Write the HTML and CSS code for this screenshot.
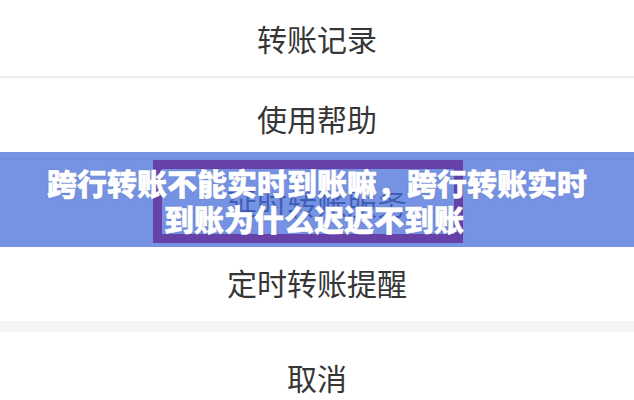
FILE: index.html
```html
<!DOCTYPE html>
<html lang="zh-CN">
<head>
<meta charset="utf-8">
<title>跨行转账不能实时到账嘛</title>
<link rel="stylesheet" href="styles.css">
</head>
<body>
<div class="page">
  <ul class="menu">
    <li class="item item-first">转账记录</li>
    <li class="item">使用帮助</li>
    <li class="item item-hidden">延时转账服务</li>
    <li class="item item-last">定时转账提醒</li>
    <li class="gap" aria-hidden="true"></li>
    <li class="item item-cancel">取消</li>
  </ul>
  <div class="banner">
    <div class="frame"></div>
    <h1 class="title"><span class="line">跨行转账不能实时到账嘛，跨行转账实时</span><span class="line line-2">到账为什么迟迟不到账</span></h1>
  </div>
</div>
</body>
</html>
```

FILE: styles.css
```css
html, body {
  margin: 0;
  padding: 0;
  background: #ffffff;
}
.page {
  position: relative;
  width: 634px;
  height: 400px;
  overflow: hidden;
  font-family: "Noto Sans CJK SC", "Noto Sans", sans-serif;
}
.menu {
  list-style: none;
  margin: 0;
  padding: 0;
  display: flex;
  flex-direction: column;
}
.item {
  height: 80px;
  display: flex;
  align-items: center;
  justify-content: center;
  font-size: 30px;
  font-weight: 400;
  color: #363636;
  border-bottom: 2px solid #eeeeee;
}
.item-first {
  height: 76px;
}
.item-hidden {
  color: #0a1030;
  padding-top: 4px;
  height: 76px;
}
.item-last {
  height: 79px;
  border-bottom: none;
}
.gap {
  height: 11px;
  background: #f5f5f5;
}
.item-cancel {
  height: 86px;
  border-bottom: none;
  padding-top: 2px;
}
.banner {
  position: absolute;
  left: 0;
  top: 152px;
  width: 634px;
  height: 95px;
  background: rgba(80, 116, 219, 0.78);
  display: flex;
  align-items: center;
  justify-content: center;
}
.frame {
  position: absolute;
  left: 153px;
  top: 8px;
  width: 292px;
  height: 65px;
  border: 9px solid #6642a8;
}
.title {
  position: relative;
  margin: 0;
  display: flex;
  flex-direction: column;
  align-items: center;
  font-size: 30px;
  line-height: 36px;
  font-weight: 900;
  color: #ffffff;
  -webkit-text-stroke: 0.5px #ffffff;
  text-shadow: 0 0 2px rgba(40, 40, 90, 0.3);
}
.line {
  display: block;
  white-space: nowrap;
}
.line-2 {
  padding-right: 6px;
}
```
